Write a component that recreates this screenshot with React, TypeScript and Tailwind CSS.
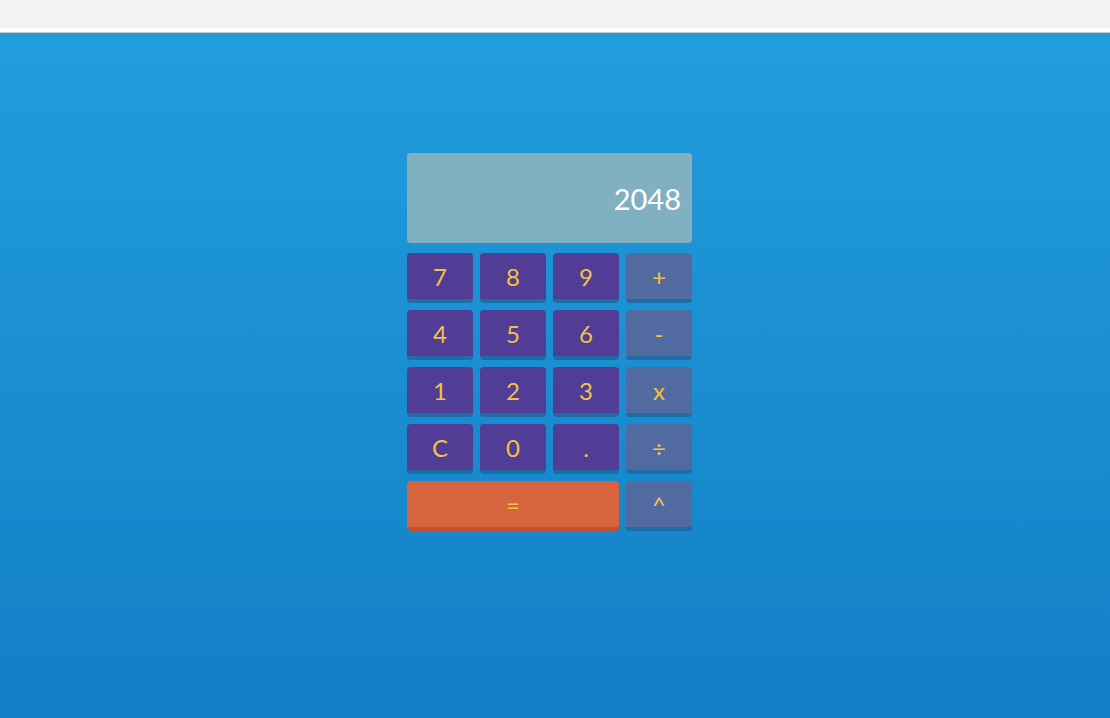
import React from "react";

const keys = [
  { label: "7", kind: "num" },
  { label: "8", kind: "num" },
  { label: "9", kind: "num" },
  { label: "+", kind: "op" },
  { label: "4", kind: "num" },
  { label: "5", kind: "num" },
  { label: "6", kind: "num" },
  { label: "-", kind: "op" },
  { label: "1", kind: "num" },
  { label: "2", kind: "num" },
  { label: "3", kind: "num" },
  { label: "x", kind: "op" },
  { label: "C", kind: "num" },
  { label: "0", kind: "num" },
  { label: ".", kind: "num" },
  { label: "÷", kind: "op" },
  { label: "=", kind: "eq" },
  { label: "^", kind: "op" },
];

function Key({ label, kind }: { label: string; kind: string }) {
  const color =
    kind === "num"
      ? "bg-[#513c96] border-[#1c6da6]"
      : kind === "op"
        ? "bg-[#516aa0] border-[#1c6da6]"
        : "col-span-3 bg-[#d6653e] border-[#c4512e]";
  return (
    <button
      className={`h-[50px] rounded-[4px] border-b-4 pt-[2px] text-[24px] text-[#f3c244] leading-none flex items-center justify-center ${color}`}
    >
      {label}
    </button>
  );
}

export default function App() {
  return (
    <div className="h-[718px] flex flex-col font-['Lato',sans-serif]">
      <div className="h-[28px] bg-[#f2f3f5]" />
      <div className="h-[5px] bg-white border-b border-[#c9ccd0]" />
      <div className="flex-1 bg-gradient-to-b from-[#229ddc] to-[#127fc6] flex justify-center pr-[11px]">
        <div className="w-[285px] mt-[120px]">
          <div className="h-[90px] rounded-[4px] bg-[#81b1c1] flex items-center justify-end pr-[11px] pt-[2px] text-white text-[29px]">
            2048
          </div>
          <div className="grid grid-cols-4 gap-[7px] mt-[10px]">
            {keys.map((k) => (
              <Key key={k.label} label={k.label} kind={k.kind} />
            ))}
          </div>
        </div>
      </div>
    </div>
  );
}
